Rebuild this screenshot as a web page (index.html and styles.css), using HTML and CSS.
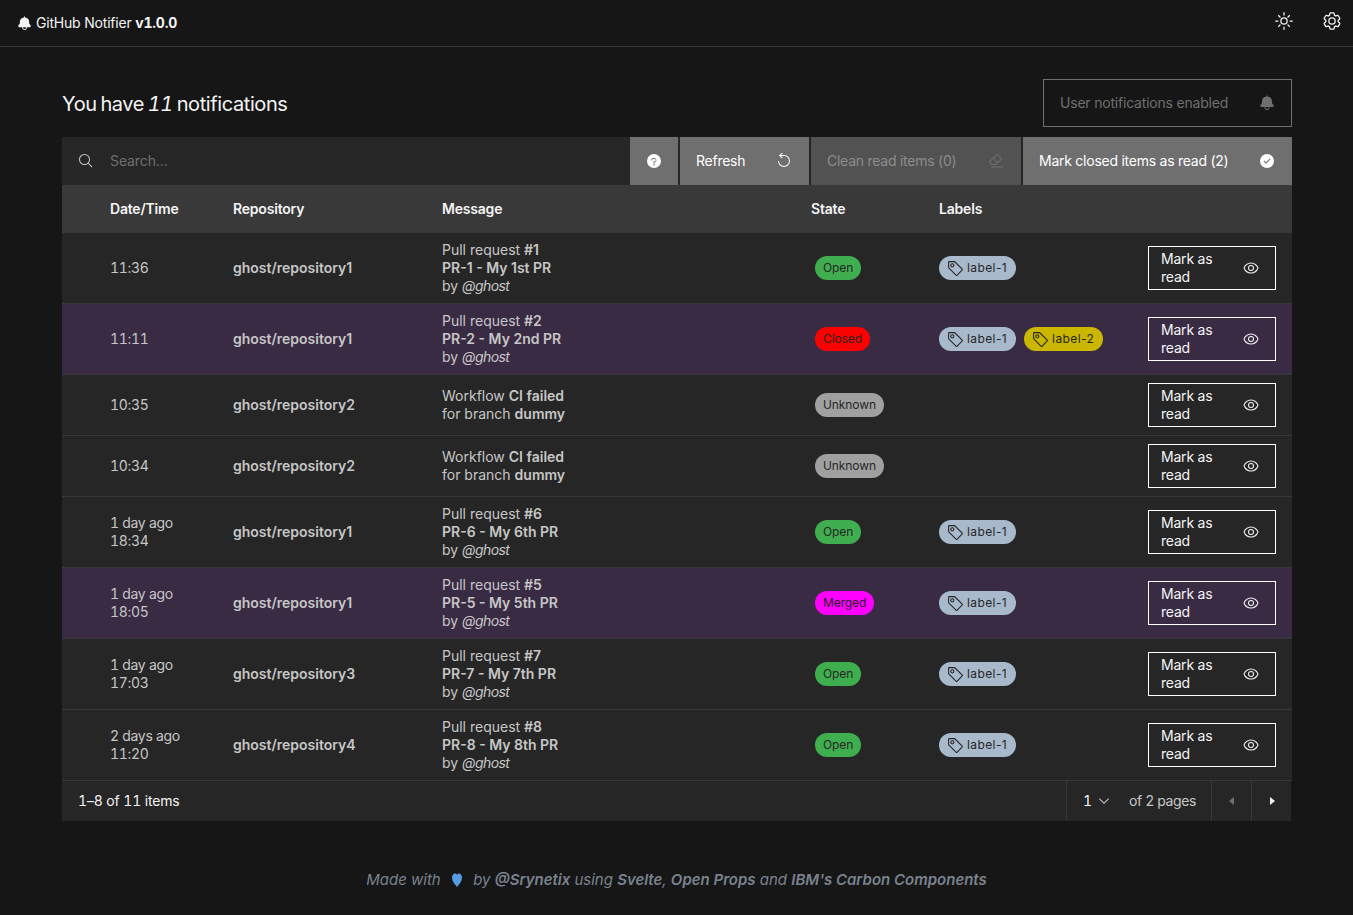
FILE: index.html
```html
<!DOCTYPE html>
<html lang="en">
<head>
  <meta charset="UTF-8">
  <title>GitHub Notifier</title>
  <link rel="stylesheet" href="styles.css">
</head>
<body>
  <svg class="sprites" xmlns="http://www.w3.org/2000/svg">
    <symbol id="i-bell" viewBox="0 0 32 32"><path d="M28.7071,19.293,26,16.5859V13a10.0136,10.0136,0,0,0-9-9.9492V1H15V3.0508A10.0136,10.0136,0,0,0,6,13v3.5859L3.2929,19.293A1,1,0,0,0,3,20v3a1,1,0,0,0,1,1h7v.7768a5.152,5.152,0,0,0,4.5,5.1987A5.0057,5.0057,0,0,0,21,25V24h7a1,1,0,0,0,1-1V20A1,1,0,0,0,28.7071,19.293ZM19,25a3,3,0,0,1-6,0V24h6Z"/></symbol>
    <symbol id="i-sun" viewBox="0 0 32 32"><path d="M16,12a4,4,0,1,1-4,4A4.0045,4.0045,0,0,1,16,12m0-2a6,6,0,1,0,6,6,6,6,0,0,0-6-6Z"/><path d="M15 2h2v5h-2zM15 25h2v5h-2zM2 15h5v2H2zM25 15h5v2h-5zM6.1 7.5l1.4-1.4 3.5 3.5-1.4 1.4zM21 22.4l1.4-1.4 3.5 3.5-1.4 1.4zM6.1 24.5l3.5-3.5 1.4 1.4-3.5 3.5zM21 9.6l3.5-3.5 1.4 1.4-3.5 3.5z"/></symbol>
    <symbol id="i-gear" viewBox="0 0 32 32"><path d="M27,16.76c0-.25,0-.5,0-.76s0-.51,0-.77l1.92-1.68A2,2,0,0,0,29.3,11L26.94,7a2,2,0,0,0-1.73-1,2,2,0,0,0-.64.1l-2.43.82a11.35,11.35,0,0,0-1.31-.75l-.51-2.52a2,2,0,0,0-2-1.61H13.64a2,2,0,0,0-2,1.61l-.51,2.52a11.48,11.48,0,0,0-1.32.75L7.43,6.06A2,2,0,0,0,6.79,6,2,2,0,0,0,5.06,7L2.7,11a2,2,0,0,0,.41,2.51L5,15.24c0,.25,0,.5,0,.76s0,.51,0,.77L3.11,18.45A2,2,0,0,0,2.7,21L5.06,25a2,2,0,0,0,1.73,1,2,2,0,0,0,.64-.1l2.43-.82a11.35,11.35,0,0,0,1.31.75l.51,2.52a2,2,0,0,0,2,1.61h4.72a2,2,0,0,0,2-1.61l.51-2.52a11.48,11.48,0,0,0,1.32-.75l2.42.82a2,2,0,0,0,.64.1,2,2,0,0,0,1.73-1L29.3,21a2,2,0,0,0-.41-2.51ZM25.21,24l-3.43-1.16a8.86,8.86,0,0,1-2.71,1.57L18.36,28H13.64l-.71-3.55a9.36,9.36,0,0,1-2.7-1.57L6.79,24,4.43,20l2.72-2.4a8.9,8.9,0,0,1,0-3.13L4.43,12,6.79,8l3.43,1.16a8.86,8.86,0,0,1,2.71-1.57L13.64,4h4.72l.71,3.55a9.36,9.36,0,0,1,2.7,1.57L25.21,8,27.57,12l-2.72,2.4a8.9,8.9,0,0,1,0,3.13L27.57,20Z"/><path d="M16,22a6,6,0,1,1,6-6A5.94,5.94,0,0,1,16,22Zm0-10a3.91,3.91,0,0,0-4,4,3.91,3.91,0,0,0,4,4,3.91,3.91,0,0,0,4-4A3.91,3.91,0,0,0,16,12Z"/></symbol>
    <symbol id="i-search" viewBox="0 0 32 32"><path d="M29,27.5859l-7.5521-7.5521a11.0177,11.0177,0,1,0-1.4141,1.4141L27.5859,29ZM4,13a9,9,0,1,1,9,9A9.01,9.01,0,0,1,4,13Z"/></symbol>
    <symbol id="i-help" viewBox="0 0 32 32"><path d="M16,2A14,14,0,1,0,30,16,14,14,0,0,0,16,2Zm0,23a1.5,1.5,0,1,1,1.5-1.5A1.5,1.5,0,0,1,16,25Zm1.1-6.1V21H15V17h2a2.5,2.5,0,0,0,0-5H15a2.5,2.5,0,0,0-2.5,2.5V15h-2v-.5A4.5,4.5,0,0,1,15,10h2a4.5,4.5,0,0,1,.1,8.9Z"/></symbol>
    <symbol id="i-reset" viewBox="0 0 32 32"><path transform="matrix(-1 0 0 1 31 -2)" d="M25,18A10,10,0,1,1,15,8h6.18l-3.58,3.59L19,13l6-6L19,1,17.6,2.41,21.19,6H15A12,12,0,1,0,27,18Z"/></symbol>
    <symbol id="i-erase" viewBox="0 0 32 32"><path d="M7 27H30V29H7z"/><path d="M27.38,10.51,19.45,2.59a2,2,0,0,0-2.83,0l-14,14a2,2,0,0,0,0,2.83L7.13,24h9.59L27.38,13.34A2,2,0,0,0,27.38,10.51ZM15.89,22H8L4,18l6.31-6.31,7.93,7.92Zm3.76-3.76-7.92-7.93L18,4,26,11.93Z"/></symbol>
    <symbol id="i-check" viewBox="0 0 32 32"><path d="M16,2A14,14,0,1,0,30,16,14,14,0,0,0,16,2ZM14,21.5908l-5-5L10.5906,15,14,18.4092,21.41,11l1.5957,1.5859Z"/></symbol>
    <symbol id="i-eye" viewBox="0 0 32 32"><path d="M30.94,15.66A16.69,16.69,0,0,0,16,5,16.69,16.69,0,0,0,1.06,15.66a1,1,0,0,0,0,.68A16.69,16.69,0,0,0,16,27,16.69,16.69,0,0,0,30.94,16.34,1,1,0,0,0,30.94,15.66ZM16,25c-5.3,0-10.9-3.93-12.93-9C5.1,10.93,10.7,7,16,7s10.9,3.93,12.93,9C26.9,21.07,21.3,25,16,25Z"/><path d="M16,10a6,6,0,1,0,6,6A6,6,0,0,0,16,10Zm0,10a4,4,0,1,1,4-4A4,4,0,0,1,16,20Z"/></symbol>
    <symbol id="i-tag" viewBox="0 0 32 32"><path d="M10,14a4,4,0,1,1,4-4A4.0045,4.0045,0,0,1,10,14Zm0-6a2,2,0,1,0,1.998,2.0044A2.002,2.002,0,0,0,10,8Z"/><path d="M16.6436,29.4145,2.5858,15.3555A2,2,0,0,1,2,13.9414V4A2,2,0,0,1,4,2h9.9413a2,2,0,0,1,1.4142.5858L29.4144,16.6436a2.0018,2.0018,0,0,1,0,2.8285l-9.9424,9.9424a2.0024,2.0024,0,0,1-2.8284,0ZM4,4v9.9416L18.0578,28,28,18.0579,13.9414,4Z"/></symbol>
    <symbol id="i-chevron" viewBox="0 0 32 32"><path d="M16 22L6 12 7.4 10.6 16 19.2 24.6 10.6 26 12z"/></symbol>
    <symbol id="i-left" viewBox="0 0 32 32"><path d="M20 24L10 16 20 8z"/></symbol>
    <symbol id="i-right" viewBox="0 0 32 32"><path d="M12 8L22 16 12 24z"/></symbol>
    <symbol id="i-heart" viewBox="0 0 10 14"><path d="M5 14C2 10.6 0 8.2 0 4.6 0 2 1.4.4 3 .4 4 .4 4.7 1 5 1.8 5.3 1 6 .4 7 .4 8.6.4 10 2 10 4.6 10 8.2 8 10.6 5 14z"/></symbol>
  </svg>

  <header class="topbar">
    <div class="brand">
      <svg class="icon brand-bell"><use href="#i-bell"/></svg>
      <span>GitHub Notifier <b>v1.0.0</b></span>
    </div>
    <div class="topbar-actions">
      <svg class="icon icon-20"><use href="#i-sun"/></svg>
      <svg class="icon icon-20"><use href="#i-gear"/></svg>
    </div>
  </header>

  <main class="content">
    <div class="title-row">
      <h1>You have <em>11</em> notifications</h1>
      <button type="button" class="notif-btn">
        <span>User notifications enabled</span>
        <svg class="icon"><use href="#i-bell"/></svg>
      </button>
    </div>

    <div class="toolbar">
      <label class="search">
        <svg class="icon"><use href="#i-search"/></svg>
        <input type="text" placeholder="Search...">
      </label>
      <button type="button" class="tool-btn help-btn"><svg class="icon"><use href="#i-help"/></svg></button>
      <button type="button" class="tool-btn refresh-btn"><span>Refresh</span><svg class="icon"><use href="#i-reset"/></svg></button>
      <button type="button" class="tool-btn clean-btn" disabled><span>Clean read items (0)</span><svg class="icon"><use href="#i-erase"/></svg></button>
      <button type="button" class="tool-btn mark-btn"><span>Mark closed items as read (2)</span><svg class="icon"><use href="#i-check"/></svg></button>
    </div>

    <table class="list">
      <colgroup>
        <col class="c-expand"><col class="c-date"><col class="c-repo"><col class="c-msg"><col class="c-state"><col class="c-labels"><col class="c-action">
      </colgroup>
      <thead>
        <tr><th></th><th>Date/Time</th><th>Repository</th><th>Message</th><th>State</th><th>Labels</th><th></th></tr>
      </thead>
      <tbody>
        <tr>
          <td></td><td class="when">11:36</td><td class="repo">ghost/repository1</td>
          <td>Pull request <b>#1</b><br><b>PR-1 - My 1st PR</b><br>by <i>@ghost</i></td>
          <td><span class="pill open">Open</span></td>
          <td><div class="labels"><span class="pill label-1"><svg class="icon"><use href="#i-tag"/></svg>label-1</span></div></td>
          <td><button type="button" class="read-btn"><span>Mark as read</span><svg class="icon"><use href="#i-eye"/></svg></button></td>
        </tr>
        <tr class="unread">
          <td></td><td class="when">11:11</td><td class="repo">ghost/repository1</td>
          <td>Pull request <b>#2</b><br><b>PR-2 - My 2nd PR</b><br>by <i>@ghost</i></td>
          <td><span class="pill closed">Closed</span></td>
          <td><div class="labels"><span class="pill label-1"><svg class="icon"><use href="#i-tag"/></svg>label-1</span><span class="pill label-2"><svg class="icon"><use href="#i-tag"/></svg>label-2</span></div></td>
          <td><button type="button" class="read-btn"><span>Mark as read</span><svg class="icon"><use href="#i-eye"/></svg></button></td>
        </tr>
        <tr>
          <td></td><td class="when">10:35</td><td class="repo">ghost/repository2</td>
          <td>Workflow <b>CI failed</b><br>for branch <b>dummy</b></td>
          <td><span class="pill unknown">Unknown</span></td>
          <td></td>
          <td><button type="button" class="read-btn"><span>Mark as read</span><svg class="icon"><use href="#i-eye"/></svg></button></td>
        </tr>
        <tr>
          <td></td><td class="when">10:34</td><td class="repo">ghost/repository2</td>
          <td>Workflow <b>CI failed</b><br>for branch <b>dummy</b></td>
          <td><span class="pill unknown">Unknown</span></td>
          <td></td>
          <td><button type="button" class="read-btn"><span>Mark as read</span><svg class="icon"><use href="#i-eye"/></svg></button></td>
        </tr>
        <tr>
          <td></td><td class="when">1 day ago<br>18:34</td><td class="repo">ghost/repository1</td>
          <td>Pull request <b>#6</b><br><b>PR-6 - My 6th PR</b><br>by <i>@ghost</i></td>
          <td><span class="pill open">Open</span></td>
          <td><div class="labels"><span class="pill label-1"><svg class="icon"><use href="#i-tag"/></svg>label-1</span></div></td>
          <td><button type="button" class="read-btn"><span>Mark as read</span><svg class="icon"><use href="#i-eye"/></svg></button></td>
        </tr>
        <tr class="unread">
          <td></td><td class="when">1 day ago<br>18:05</td><td class="repo">ghost/repository1</td>
          <td>Pull request <b>#5</b><br><b>PR-5 - My 5th PR</b><br>by <i>@ghost</i></td>
          <td><span class="pill merged">Merged</span></td>
          <td><div class="labels"><span class="pill label-1"><svg class="icon"><use href="#i-tag"/></svg>label-1</span></div></td>
          <td><button type="button" class="read-btn"><span>Mark as read</span><svg class="icon"><use href="#i-eye"/></svg></button></td>
        </tr>
        <tr>
          <td></td><td class="when">1 day ago<br>17:03</td><td class="repo">ghost/repository3</td>
          <td>Pull request <b>#7</b><br><b>PR-7 - My 7th PR</b><br>by <i>@ghost</i></td>
          <td><span class="pill open">Open</span></td>
          <td><div class="labels"><span class="pill label-1"><svg class="icon"><use href="#i-tag"/></svg>label-1</span></div></td>
          <td><button type="button" class="read-btn"><span>Mark as read</span><svg class="icon"><use href="#i-eye"/></svg></button></td>
        </tr>
        <tr>
          <td></td><td class="when">2 days ago<br>11:20</td><td class="repo">ghost/repository4</td>
          <td>Pull request <b>#8</b><br><b>PR-8 - My 8th PR</b><br>by <i>@ghost</i></td>
          <td><span class="pill open">Open</span></td>
          <td><div class="labels"><span class="pill label-1"><svg class="icon"><use href="#i-tag"/></svg>label-1</span></div></td>
          <td><button type="button" class="read-btn"><span>Mark as read</span><svg class="icon"><use href="#i-eye"/></svg></button></td>
        </tr>
      </tbody>
    </table>

    <div class="pager">
      <div class="pager-count">1–8 of 11 items</div>
      <div class="pager-page">
        <span class="pager-num">1</span>
        <svg class="icon"><use href="#i-chevron"/></svg>
        <span class="pager-total">of 2 pages</span>
      </div>
      <button type="button" class="pager-btn" disabled><svg class="icon"><use href="#i-left"/></svg></button>
      <button type="button" class="pager-btn"><svg class="icon"><use href="#i-right"/></svg></button>
    </div>
  </main>

  <footer class="footer">
    Made with <svg class="heart"><use href="#i-heart"/></svg> by <b>@Srynetix</b> using <b>Svelte</b>, <b>Open Props</b> and <b>IBM's Carbon Components</b>
  </footer>
</body>
</html>
```

FILE: styles.css
```css
* {
  box-sizing: border-box;
}
html, body {
  margin: 0;
  padding: 0;
}
body {
  background: #161616;
  color: #f4f4f4;
  font-family: "Inter", "Noto Sans", Arial, sans-serif;
  font-size: 14px;
  line-height: 18px;
  min-height: 100vh;
}
button, input {
  font: inherit;
}
.sprites {
  display: none;
}
.icon {
  width: 16px;
  height: 16px;
  fill: currentColor;
  flex: none;
}
.icon-20 {
  width: 20px;
  height: 20px;
}

/* top bar */
.topbar {
  height: 47px;
  border-bottom: 1px solid #393939;
  display: flex;
  align-items: center;
  justify-content: space-between;
  padding: 0 11px 0 17px;
}
.brand {
  display: flex;
  align-items: center;
  gap: 4px;
  letter-spacing: -0.2px;
}
.brand b {
  font-variant-numeric: tabular-nums;
}
.brand-bell {
  width: 15px;
  height: 15px;
}
.topbar-actions {
  display: flex;
  gap: 28px;
  margin-top: -4px;
}

.content {
  padding: 32px 61px 0 62px;
}
.title-row {
  display: flex;
  align-items: center;
  justify-content: space-between;
  margin-bottom: 10px;
}
h1 {
  margin: 0;
  padding-top: 2px;
  font-size: 20px;
  font-weight: 400;
  line-height: 46px;
  letter-spacing: -0.4px;
  word-spacing: -1.5px;
}
h1 em {
  font-variant-numeric: tabular-nums;
}
.notif-btn {
  width: 249px;
  height: 48px;
  background: none;
  border: 1px solid #6f6f6f;
  color: #6f6f6f;
  padding: 0 16px;
  display: flex;
  align-items: center;
  justify-content: space-between;
  letter-spacing: -0.2px;
}

/* toolbar */
.toolbar {
  display: flex;
  height: 48px;
  background: #262626;
}
.search {
  flex: 1;
  display: flex;
  align-items: center;
  gap: 16px;
  padding-left: 16px;
  color: #c6c6c6;
}
.search input {
  flex: 1;
  min-width: 0;
  background: none;
  border: none;
  outline: none;
  padding: 0;
  color: #f4f4f4;
  letter-spacing: -0.1px;
}
.search input::placeholder {
  color: #6f6f6f;
}
.tool-btn {
  height: 48px;
  border: none;
  background: #6f6f6f;
  color: #fff;
  display: flex;
  align-items: center;
  justify-content: space-between;
  padding: 0 17px 0 16px;
  margin-right: 2px;
  letter-spacing: -0.25px;
}
.help-btn {
  width: 48px;
  padding: 0;
  justify-content: center;
}
.refresh-btn {
  width: 129px;
}
.clean-btn {
  width: 210px;
  background: #525252;
  color: #8d8d8d;
}
.clean-btn .icon {
  color: #6f6f6f;
}
.mark-btn {
  width: 269px;
  margin-right: 0;
}

/* table */
.list {
  width: 100%;
  table-layout: fixed;
  border-collapse: collapse;
  background: #262626;
  color: #c6c6c6;
}
.c-expand { width: 32px; }
.c-date { width: 123px; }
.c-repo { width: 209px; }
.c-msg { width: 369px; }
.c-state { width: 128px; }
.c-labels { width: 209px; }
.c-action { width: 160px; }
.list th {
  height: 48px;
  background: #393939;
  color: #f4f4f4;
  font-weight: 600;
  text-align: left;
  padding: 0 16px;
  letter-spacing: -0.2px;
}
.list td {
  padding: 8px 16px;
  border-bottom: 1px solid #393939;
  vertical-align: middle;
}
.list td:first-child,
.list th:first-child {
  padding: 0;
}
.list b {
  font-weight: 600;
}
.list i {
  letter-spacing: -0.6px;
}
.list .when {
  font-variant-numeric: tabular-nums;
  letter-spacing: -0.3px;
}
.repo {
  font-weight: 600;
}
.unread td {
  background: #3a2b45;
}
.pill {
  display: inline-flex;
  align-items: center;
  height: 24px;
  border-radius: 12px;
  padding: 0 8px;
  margin: 0 4px;
  font-size: 12px;
  letter-spacing: -0.1px;
  color: #262626;
  vertical-align: middle;
}
.open { background: #3fae4f; }
.closed { background: #ff0000; }
.unknown { background: #a0a0a0; }
.merged { background: #ff00ff; }
.labels {
  display: flex;
  gap: 8px;
}
.labels .pill {
  margin: 0;
  gap: 3px;
  padding-right: 9px;
  letter-spacing: 0.4px;
}
.labels .icon {
  width: 17px;
  height: 17px;
}
.label-1 { background: #a8b9cc; }
.label-2 { background: #cbb700; }
.read-btn {
  width: 128px;
  height: 44px;
  background: none;
  border: 1px solid #fff;
  color: #f4f4f4;
  display: flex;
  align-items: center;
  justify-content: space-between;
  padding: 3px 16px 3px 12px;
  text-align: left;
  line-height: 18px;
  letter-spacing: -0.2px;
}
.read-btn span {
  width: 70px;
}

/* pager */
.pager {
  display: flex;
  align-items: stretch;
  height: 40px;
  background: #262626;
  width: 1229px;
  font-variant-numeric: tabular-nums;
}
.pager-count {
  flex: 1;
  display: flex;
  align-items: center;
  padding-left: 16px;
  letter-spacing: -0.15px;
}
.pager-page {
  width: 145px;
  display: flex;
  align-items: center;
  border-left: 1px solid #393939;
  padding-left: 16px;
}
.pager-num {
  margin-right: 4px;
}
.pager-page .icon {
  color: #c6c6c6;
}
.pager-total {
  margin-left: 17px;
  color: #c6c6c6;
  letter-spacing: -0.4px;
}
.pager-btn {
  width: 40px;
  background: none;
  border: none;
  border-left: 1px solid #393939;
  color: #f4f4f4;
  display: flex;
  align-items: center;
  justify-content: center;
  padding: 0;
}
.pager-btn:disabled {
  color: #6f6f6f;
}

.footer {
  margin-top: 48px;
  text-align: center;
  font-size: 15px;
  line-height: 22px;
  font-style: italic;
  color: #7a828e;
}
.footer b {
  font-weight: 600;
}
.heart {
  width: 10px;
  height: 14px;
  margin: 0 7px;
  fill: #559be0;
  vertical-align: -2px;
}
```
